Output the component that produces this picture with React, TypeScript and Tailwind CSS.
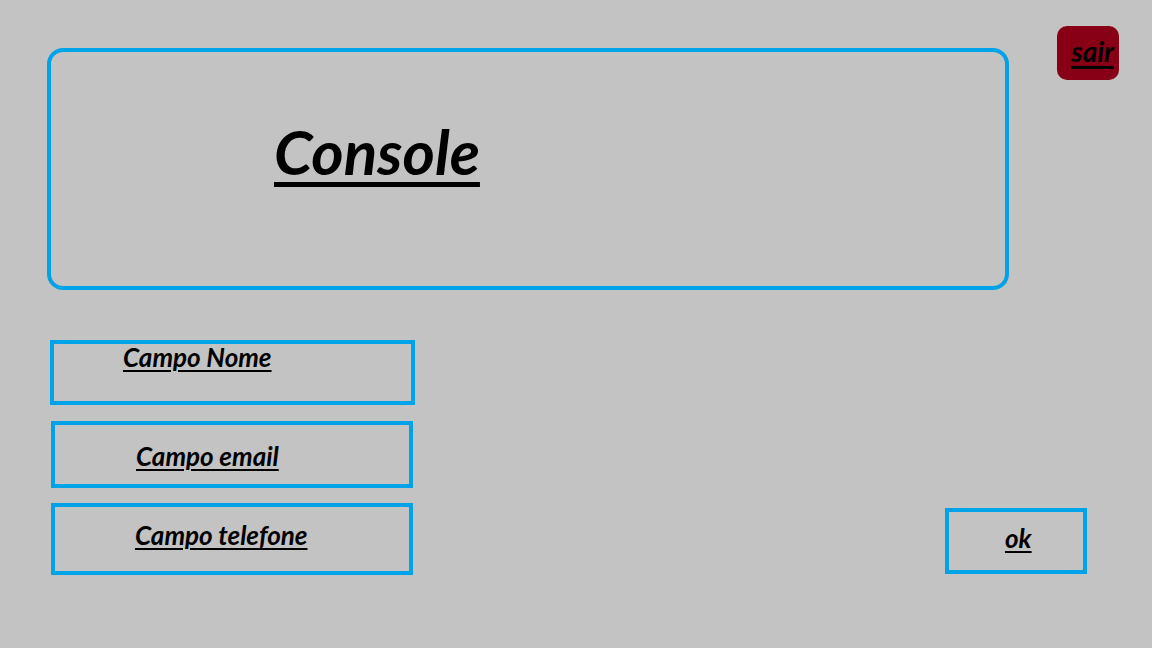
import React from "react";

const font = { fontFamily: "Lato, 'Open Sans', sans-serif" };

export default function App() {
  return (
    <div
      className="w-[1152px] h-[648px] bg-[#c3c3c3] text-black font-bold italic overflow-hidden"
      style={font}
    >
      <div className="flex items-start pt-[26px] pl-[47px]">
        <div className="mt-[22px] w-[962px] h-[242px] border-4 border-[#00a2e8] rounded-[16px] pl-[223px] pt-[70px]">
          <span className="text-[62px] leading-[58px] underline decoration-[5px] underline-offset-[7px]">
            Console
          </span>
        </div>
        <div className="ml-[48px] w-[62px] h-[54px] bg-[#880015] rounded-[10px] flex items-start justify-end pr-[5px] pt-[10px]">
          <span className="text-[28px] leading-[30px] underline decoration-[3px] underline-offset-[4px]">
            sair
          </span>
        </div>
      </div>

      <div className="flex items-end pl-[50px] mt-[50px]">
        <div className="flex flex-col">
          <div className="w-[365px] h-[65px] border-[4px] border-[#00a2e8] pl-[69px] pt-[1px]">
            <span className="text-[26px] leading-[24px] underline decoration-[2px] underline-offset-[3px]">
              Campo Nome
            </span>
          </div>
          <div className="ml-[1px] mt-[16px] w-[362px] h-[67px] border-[4px] border-[#00a2e8] pl-[81px] pt-[19px]">
            <span className="text-[26px] leading-[24px] underline decoration-[2px] underline-offset-[3px]">
              Campo email
            </span>
          </div>
          <div className="ml-[1px] mt-[15px] w-[362px] h-[72px] border-[4px] border-[#00a2e8] pl-[80px] pt-[16px]">
            <span className="text-[26px] leading-[24px] underline decoration-[2px] underline-offset-[3px]">
              Campo telefone
            </span>
          </div>
        </div>
        <div className="ml-[530px] mb-[1px] w-[142px] h-[66px] border-[4px] border-[#00a2e8] pl-[56px] pt-[14px]">
          <span className="text-[26px] leading-[24px] underline decoration-[2px] underline-offset-[3px]">
            ok
          </span>
        </div>
      </div>
    </div>
  );
}
